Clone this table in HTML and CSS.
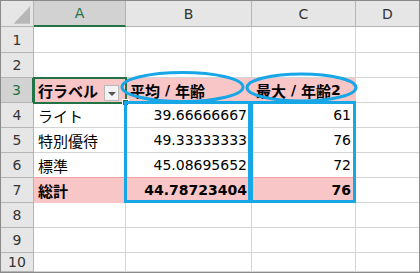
FILE: index.html
```html
<!DOCTYPE html>
<html lang="ja">

<head>
    <meta charset="UTF-8">
    <link rel="stylesheet" href="styles.css">
</head>

<body>

    <div class="hoja">
        <div class="celdas">
            <!-- cabecera de columnas -->
            <div class="esquina">
                <svg width="33" height="26" viewBox="0 0 33 26"><polygon points="30,5 30,23 13,23" fill="#b7b7b7" /></svg>
            </div>
            <div class="col sel">A</div>
            <div class="col">B</div>
            <div class="col">C</div>
            <div class="col ult">D</div>

            <!-- fila 1 -->
            <div class="fil">1</div>
            <div class="c"></div>
            <div class="c"></div>
            <div class="c"></div>
            <div class="c ult"></div>

            <!-- fila 2 -->
            <div class="fil">2</div>
            <div class="c"></div>
            <div class="c"></div>
            <div class="c"></div>
            <div class="c ult"></div>

            <!-- fila 3: encabezado de la tabla dinámica -->
            <div class="fil sel">3</div>
            <div class="c rosa negrita activa"><span class="jp">行ラベル</span><span class="filtro"></span></div>
            <div class="c rosa negrita"><span class="jp">平均</span>&nbsp;/&nbsp;<span class="jp">年齢</span></div>
            <div class="c rosa negrita"><span class="jp">最大</span>&nbsp;/&nbsp;<span class="jp">年齢</span>2</div>
            <div class="c ult"></div>

            <!-- filas de datos -->
            <div class="fil">4</div>
            <div class="c"><span class="jp">ライト</span></div>
            <div class="c num">39.66666667</div>
            <div class="c num">61</div>
            <div class="c ult"></div>

            <div class="fil">5</div>
            <div class="c"><span class="jp">特別優待</span></div>
            <div class="c num">49.33333333</div>
            <div class="c num">76</div>
            <div class="c ult"></div>

            <div class="fil">6</div>
            <div class="c antes"><span class="jp">標準</span></div>
            <div class="c num antes">45.08695652</div>
            <div class="c num antes">72</div>
            <div class="c ult"></div>

            <!-- total general -->
            <div class="fil">7</div>
            <div class="c rosa negrita"><span class="jp">総計</span></div>
            <div class="c rosa negrita num">44.78723404</div>
            <div class="c rosa negrita num">76</div>
            <div class="c ult"></div>

            <div class="fil">8</div>
            <div class="c"></div>
            <div class="c"></div>
            <div class="c"></div>
            <div class="c ult"></div>

            <div class="fil">9</div>
            <div class="c"></div>
            <div class="c"></div>
            <div class="c"></div>
            <div class="c ult"></div>

            <div class="fil">10</div>
            <div class="c"></div>
            <div class="c"></div>
            <div class="c"></div>
            <div class="c ult"></div>
        </div>

        <!-- marcas azules encima de la hoja -->
        <svg class="marcas" width="420" height="273" viewBox="0 0 420 273">
            <ellipse cx="182.5" cy="87" rx="60.5" ry="14.5" />
            <ellipse cx="301.5" cy="87.5" rx="54.5" ry="13.5" />
            <rect x="125.5" y="102.5" width="124" height="99" />
            <rect x="251.5" y="102.5" width="103" height="99" />
        </svg>
    </div>

</body>

</html>
```

FILE: styles.css
```css
/*página sin margen, fuente general (latín ancho + japonés)*/
body {
    margin: 0;
    font-family: "DejaVu Sans", "Noto Sans CJK JP", sans-serif;
}

/*contenedor: marco exterior y referencia para las marcas*/
.hoja {
    position: relative;
    width: 420px;
    height: 273px;
}

/*rejilla de celdas*/
.celdas {
    box-sizing: border-box;
    width: 420px;
    height: 273px;
    border: 1px solid #8a8a8a;
    display: grid;
    grid-template-columns: 33px 92px 126px 104px 63px;
    grid-template-rows: 26px 26px repeat(8, 25px) 19px;
    overflow: hidden;
    background-color: white;
}

.celdas > div {
    box-sizing: border-box;
    border-right: 1px solid #d4d4d4;
    border-bottom: 1px solid #d4d4d4;
    display: flex;
    align-items: center;
    white-space: nowrap;
    font-size: 14px;
    color: #000;
}

/*texto japonés un poco mayor*/
.jp {
    font-family: "Noto Sans CJK JP", sans-serif;
    font-size: 15px;
}

/*cabeceras de fila y columna*/
.celdas > .esquina,
.celdas > .col,
.celdas > .fil {
    background-color: #e6e6e6;
    border-color: #b4b4b4;
    justify-content: center;
    color: #333;
}

.esquina svg {
    display: block;
}

.celdas > .col.sel {
    background-color: #d2d2d2;
    color: #217346;
    border-bottom: 2px solid #217346;
}

.celdas > .fil.sel {
    background-color: #d2d2d2;
    color: #217346;
    border-right: 2px solid #217346;
}

/*celdas normales*/
.c {
    padding: 0 4px;
}

.c.num {
    justify-content: flex-end;
    padding-right: 4px;
}

.celdas > .ult {
    border-right: none;
}

/*estilo de la tabla dinámica*/
.celdas > .rosa {
    background-color: #f8c6c6;
    border-color: #f8c6c6;
}

.celdas > .antes {
    border-bottom-color: #eba3a3;
}

.negrita {
    font-weight: bold;
}

/*celda activa con su controlador de relleno*/
.activa {
    position: relative;
    outline: 2px solid #217346;
    outline-offset: -1px;
}

.activa::after {
    content: "";
    position: absolute;
    right: -4px;
    bottom: -4px;
    width: 5px;
    height: 5px;
    background-color: #217346;
    border: 1px solid white;
}

/*botón de filtro del rótulo de filas*/
.filtro {
    margin-left: auto;
    margin-right: 2px;
    align-self: flex-end;
    margin-bottom: 1px;
    box-sizing: border-box;
    width: 15px;
    height: 16px;
    background-color: #f3f3f3;
    border: 1px solid #b9b9b9;
    position: relative;
}

.filtro::before {
    content: "";
    position: absolute;
    left: 3px;
    top: 6px;
    border-left: 4px solid transparent;
    border-right: 4px solid transparent;
    border-top: 4px solid #555;
}

/*óvalos y recuadros azules*/
.marcas {
    position: absolute;
    left: 0;
    top: 0;
    pointer-events: none;
}

.marcas ellipse,
.marcas rect {
    fill: none;
    stroke: #17a6e6;
    stroke-width: 3;
}
```
